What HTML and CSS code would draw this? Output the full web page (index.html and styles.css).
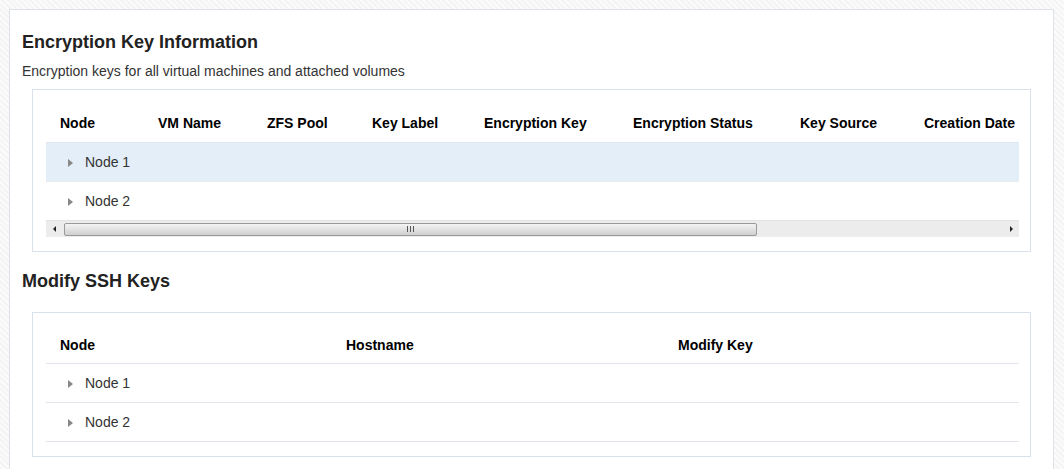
FILE: index.html
```html
<!DOCTYPE html>
<html lang="en">
<head>
  <meta charset="UTF-8">
  <meta name="viewport" content="width=device-width, initial-scale=1.0">
  <title>Encryption Keys</title>
  <link rel="stylesheet" href="styles.css">
</head>
<body>
  <div class="panel">
    <h2 class="title">Encryption Key Information</h2>
    <p class="subtitle">Encryption keys for all virtual machines and attached volumes</p>

    <div class="box">
      <div class="scroller">
        <table class="grid wide">
          <colgroup>
            <col style="width:98px"><col style="width:109px"><col style="width:105px"><col style="width:112px">
            <col style="width:149px"><col style="width:167px"><col style="width:124px"><col>
          </colgroup>
          <thead>
            <tr>
              <th>Node</th>
              <th>VM Name</th>
              <th>ZFS Pool</th>
              <th>Key Label</th>
              <th>Encryption Key</th>
              <th>Encryption Status</th>
              <th>Key Source</th>
              <th>Creation Date</th>
            </tr>
          </thead>
          <tbody>
            <tr class="selected">
              <td colspan="8"><span class="caret"></span>Node 1</td>
            </tr>
            <tr class="last">
              <td colspan="8"><span class="caret"></span>Node 2</td>
            </tr>
          </tbody>
        </table>
      </div>
      <!-- fake scrollbar -->
      <div class="hscroll">
        <span class="arrow left"></span>
        <div class="track">
          <div class="thumb"><span class="grip"></span></div>
        </div>
        <span class="arrow right"></span>
      </div>
    </div>

    <h2 class="title second">Modify SSH Keys</h2>

    <div class="box">
      <table class="grid">
        <colgroup>
          <col style="width:286px"><col style="width:332px"><col>
        </colgroup>
        <thead>
          <tr class="lined">
            <th>Node</th>
            <th>Hostname</th>
            <th>Modify Key</th>
          </tr>
        </thead>
        <tbody>
          <tr class="lined">
            <td colspan="3"><span class="caret"></span>Node 1</td>
          </tr>
          <tr class="lined">
            <td colspan="3"><span class="caret"></span>Node 2</td>
          </tr>
        </tbody>
      </table>
    </div>
  </div>
</body>
</html>
```

FILE: styles.css
```css
html, body {
  margin: 0;
  height: 100%;
}
body {
  font-family: "Liberation Sans", Arial, sans-serif;
  color: #333;
  background: repeating-linear-gradient(45deg, #f4f4f4 0 2px, #fbfbfb 2px 4px);
  padding: 9px 10px 0 9px;
  box-sizing: border-box;
  overflow: hidden;
}

.panel {
  background: #fff;
  border: 1px solid #dde3e8;
  border-bottom: none;
  padding: 21px 12px 40px 12px;
  min-height: 520px;
}

.title {
  margin: 0;
  font-size: 18px;
  line-height: 22px;
  font-weight: bold;
  color: #222;
}
.title.second {
  margin-top: 18px;
}
.subtitle {
  margin: 9px 0 9px;
  font-size: 14px;
  line-height: 18px;
  color: #333;
}

.box {
  margin: 0 10px;
  border: 1px solid #d9e2ea;
  padding: 14px 11px 14px 13px;
}
.second + .box {
  margin-top: 20px;
}

.scroller {
  overflow: hidden;
}

.grid {
  border-collapse: collapse;
  table-layout: fixed;
  width: 100%;
}
.grid.wide {
  width: 1330px;
}
.grid th {
  height: 37px;
  padding: 0 0 1px 14px;
  text-align: left;
  font-size: 14px;
  font-weight: bold;
  color: #000;
  white-space: nowrap;
  vertical-align: middle;
}
.grid td {
  height: 38px;
  padding: 0 0 0 22px;
  font-size: 14px;
  color: #333;
  vertical-align: middle;
  border-top: 1px solid #e6ebef;
}
.grid tbody tr:first-child td {
  border-top: 1px solid #dfe6ec;
}
.grid tr.selected td {
  background: #e3eef8;
}
.grid tr.lined th,
.grid tr.lined td {
  border-top: none;
  border-bottom: 1px solid #dfe5ea;
}
.grid tr.lined th {
  height: 36px;
  padding-bottom: 0;
}
.grid tr.lined:first-child + tr td {
  border-top: none;
}

.caret {
  display: inline-block;
  width: 0;
  height: 0;
  border-top: 4px solid transparent;
  border-bottom: 4px solid transparent;
  border-left: 5px solid #888;
  margin-right: 12px;
  vertical-align: 0;
}

/* horizontal scrollbar */
.hscroll {
  display: flex;
  align-items: center;
  height: 16px;
  background: #ececec;
  border-top: 1px solid #e2e2e2;
}
.arrow {
  width: 16px;
  height: 16px;
  display: flex;
  align-items: center;
  justify-content: center;
  flex: none;
}
.arrow::before {
  content: "";
  border-top: 3px solid transparent;
  border-bottom: 3px solid transparent;
}
.arrow.left::before {
  border-right: 3px solid #222;
}
.arrow.right::before {
  border-left: 3px solid #222;
}
.track {
  flex: 1;
  height: 16px;
  display: flex;
  align-items: center;
  padding-left: 2px;
}
.thumb {
  width: 693px;
  height: 13px;
  box-sizing: border-box;
  border: 1px solid #9a9a9a;
  border-radius: 2px;
  background: linear-gradient(#f4f4f4, #e2e2e2 50%, #cfcfcf);
  display: flex;
  align-items: center;
  justify-content: center;
}
.grip {
  width: 7px;
  height: 6px;
  background: repeating-linear-gradient(90deg, #555 0 1px, transparent 1px 3px);
}
```
